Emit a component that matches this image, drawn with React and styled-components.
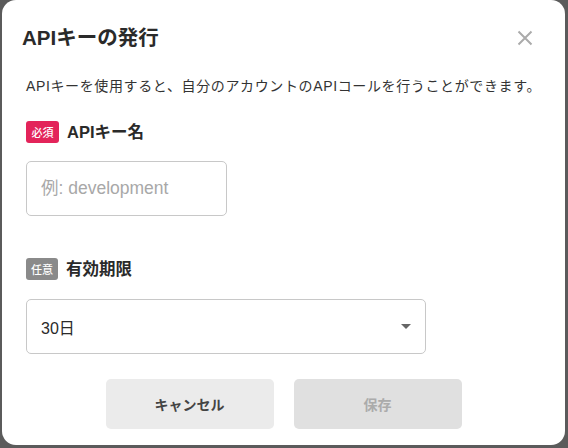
import React from 'react';
import styled, { createGlobalStyle } from 'styled-components';

const GlobalStyle = createGlobalStyle`
  html, body {
    margin: 0;
    padding: 0;
    background: #5b5b5b;
  }
  body {
    font-family: 'Liberation Sans', 'Noto Sans CJK JP', sans-serif;
    color: #333333;
  }
`;

const Dialog = styled.div`
  box-sizing: border-box;
  width: 563px;
  height: 445px;
  margin-left: 2px;
  background: #ffffff;
  border-radius: 14px;
  padding: 0 0 0 24px;
  display: flex;
  flex-direction: column;
`;

const Header = styled.div`
  display: flex;
  align-items: center;
  justify-content: space-between;
  height: 28px;
  margin-top: 24px;
  padding-right: 32px;
`;

const Title = styled.h1`
  margin: 0 0 0 -4px;
  font-size: 20.5px;
  font-weight: 700;
  line-height: 28px;
  color: #2a2a2a;
`;

const CloseButton = styled.button`
  border: none;
  background: none;
  padding: 0;
  width: 16px;
  height: 16px;
  display: flex;
  align-items: center;
  justify-content: center;
  cursor: pointer;
`;

const Description = styled.p`
  margin: 24px 0 0 0;
  font-size: 14px;
  line-height: 20px;
  letter-spacing: 0.63px;
  color: #333333;
`;

const FieldLabel = styled.div`
  display: flex;
  align-items: center;
  gap: 8px;
  margin-top: ${(p) => p.$top}px;
`;

const Badge = styled.span`
  display: inline-flex;
  align-items: center;
  justify-content: center;
  width: ${(p) => (p.$required ? 33 : 32)}px;
  height: 22px;
  border-radius: 3px;
  background: ${(p) => (p.$required ? '#e3245a' : '#8a8a8a')};
  color: #ffffff;
  font-size: 11px;
  font-weight: 500;
`;

const LabelText = styled.span`
  font-size: 16.5px;
  font-weight: 700;
  line-height: 22px;
  color: #2a2a2a;
`;

const TextInput = styled.input`
  box-sizing: border-box;
  width: 201px;
  height: 55px;
  margin: 18px 0 0 0;
  padding: 0 14px;
  border: 1px solid #c8c8c8;
  border-radius: 5px;
  font-family: inherit;
  font-size: 17.5px;
  color: #333333;
  outline: none;
  &::placeholder {
    color: #a8a8a8;
  }
`;

const SelectBox = styled.div`
  box-sizing: border-box;
  width: 400px;
  height: 55px;
  margin: 19px 0 0 0;
  padding: 0 14px;
  border: 1px solid #c8c8c8;
  border-radius: 5px;
  display: flex;
  align-items: center;
  justify-content: space-between;
  font-size: 16px;
  color: #2a2a2a;
`;

const Caret = styled.span`
  width: 0;
  height: 0;
  border-left: 5px solid transparent;
  border-right: 5px solid transparent;
  border-top: 5px solid #666666;
`;

const Footer = styled.div`
  display: flex;
  justify-content: center;
  gap: 20px;
  margin: 25px 0 0 -24px;
`;

const ActionButton = styled.button`
  width: 168px;
  height: 50px;
  border: none;
  border-radius: 5px;
  background: ${(p) => (p.$disabled ? '#e0e0e0' : '#ebebeb')};
  color: ${(p) => (p.$disabled ? '#ababab' : '#444444')};
  font-family: inherit;
  font-size: 14px;
  font-weight: 700;
  cursor: ${(p) => (p.$disabled ? 'default' : 'pointer')};
`;

const App = () => {
  return (
    <>
      <GlobalStyle />
      <Dialog>
        <Header>
          <Title>APIキーの発行</Title>
          <CloseButton aria-label="閉じる">
            <svg width="16" height="16" viewBox="0 0 16 16">
              <path d="M1.5 1.5 L14.5 14.5 M14.5 1.5 L1.5 14.5" stroke="#ababab" strokeWidth="2" />
            </svg>
          </CloseButton>
        </Header>
        <Description>
          APIキーを使用すると、自分のアカウントのAPIコールを行うことができます。
        </Description>
        <FieldLabel $top={25}>
          <Badge $required>必須</Badge>
          <LabelText>APIキー名</LabelText>
        </FieldLabel>
        <TextInput placeholder="例: development" />
        <FieldLabel $top={42}>
          <Badge>任意</Badge>
          <LabelText>有効期限</LabelText>
        </FieldLabel>
        <SelectBox>
          <span>30日</span>
          <Caret />
        </SelectBox>
        <Footer>
          <ActionButton>キャンセル</ActionButton>
          <ActionButton $disabled>保存</ActionButton>
        </Footer>
      </Dialog>
    </>
  );
};

export default App;
